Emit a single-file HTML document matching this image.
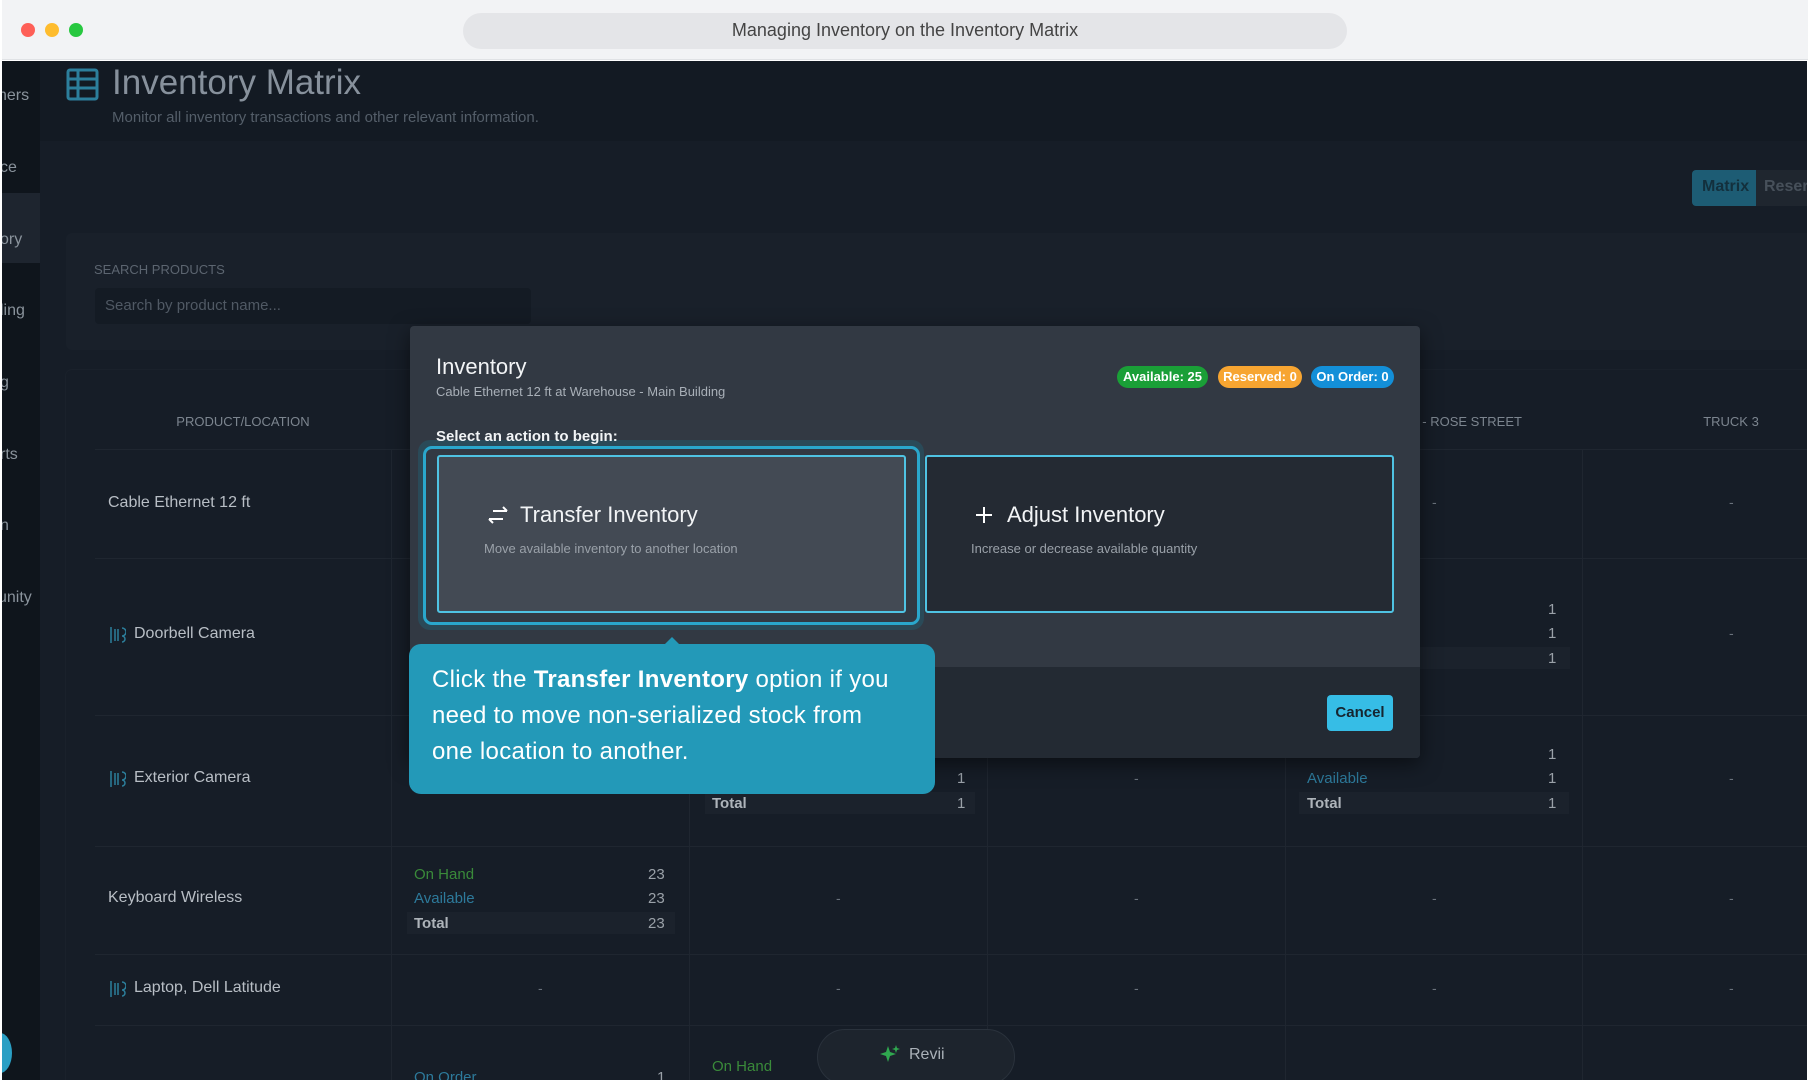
<!DOCTYPE html>
<html><head><meta charset="utf-8"><style>
*{margin:0;padding:0;box-sizing:border-box}
body{width:1810px;height:1080px;overflow:hidden;background:#fff;font-family:"Liberation Sans",sans-serif;position:relative}
.a{position:absolute}
.t{position:absolute;white-space:nowrap}
.dash{position:absolute;color:#6a727c;font-size:14px}
.lbl{font-size:16px}
</style></head><body>
<div class="a" style="left:2px;top:0;width:1806px;height:60px;background:#f2f3f5;border-bottom:1px solid #e0e2e5"></div>
<div class="a" style="left:21px;top:23px;width:14px;height:14px;border-radius:50%;background:#fe5f57"></div>
<div class="a" style="left:45px;top:23px;width:14px;height:14px;border-radius:50%;background:#febc2e"></div>
<div class="a" style="left:69px;top:23px;width:14px;height:14px;border-radius:50%;background:#28c840"></div>
<div class="a" style="left:463px;top:13px;width:884px;height:36px;border-radius:18px;background:#e4e5e8"></div>
<div class="t" style="left:463px;width:884px;top:20px;text-align:center;font-size:18px;color:#444">Managing Inventory on the Inventory Matrix</div>
<div class="a" style="left:2px;top:61px;width:1805px;height:1019px;background:#161d27;overflow:hidden">
  <div class="a" style="left:0;top:0;width:38px;height:1019px;background:#0f151c"></div>
  <div class="a" style="left:0;top:132px;width:38px;height:70px;background:#1e252f"></div>
  <div class="t" style="left:-4px;top:26px;color:#8a939c;font-size:16px">ners</div>
  <div class="t" style="left:-2px;top:98px;color:#8a939c;font-size:16px">ce</div>
  <div class="t" style="left:-2px;top:170px;color:#8a939c;font-size:16px">ory</div>
  <div class="t" style="left:-2px;top:241px;color:#8a939c;font-size:16px">ling</div>
  <div class="t" style="left:-2px;top:313px;color:#8a939c;font-size:16px">g</div>
  <div class="t" style="left:-2px;top:385px;color:#8a939c;font-size:16px">rts</div>
  <div class="t" style="left:-2px;top:456px;color:#8a939c;font-size:16px">n</div>
  <div class="t" style="left:-4px;top:528px;color:#8a939c;font-size:16px">unity</div>
  <div class="a" style="left:-14px;top:972px;width:24px;height:40px;border-radius:50%;background:#2a9fc4"></div>
  <div class="a" style="left:38px;top:0;width:1770px;height:80px;background:#131a23"></div>
  <svg class="a" style="left:64px;top:7px" width="33" height="33" viewBox="0 0 33 33" fill="none" stroke="#2c7f9c" stroke-width="3"><rect x="2" y="2" width="29" height="29" rx="2"/><path d="M2 11h29M2 20h29M12 2v29"/></svg>
  <div class="t" style="left:110px;top:2px;font-size:35px;color:#87919c">Inventory Matrix</div>
  <div class="t" style="left:110px;top:48px;font-size:15px;color:#545e69">Monitor all inventory transactions and other relevant information.</div>
  <div class="a" style="left:1690px;top:109px;width:64px;height:36px;border-radius:4px 0 0 4px;background:#1d5c74"></div>
  <div class="t" style="left:1700px;top:117px;font-size:16px;font-weight:bold;color:#13303d">Matrix</div>
  <div class="a" style="left:1754px;top:109px;width:60px;height:36px;background:#1f262f"></div>
  <div class="t" style="left:1762px;top:117px;font-size:16px;font-weight:bold;color:#47505a">Reser</div>
  <div class="a" style="left:64px;top:172px;width:1750px;height:117px;background:#19202a;border-radius:6px"></div>
  <div class="t" style="left:92px;top:201px;font-size:13px;color:#5c6570">SEARCH PRODUCTS</div>
  <div class="a" style="left:93px;top:227px;width:436px;height:36px;background:#141b24;border-radius:4px"></div>
  <div class="t" style="left:103px;top:236px;font-size:15px;color:#505964">Search by product name...</div>
  <div class="a" style="left:64px;top:309px;width:1750px;height:720px;background:#161d27;border-radius:6px;box-shadow:0 0 0 1px #1a212b"></div>
  <div class="t" style="left:93px;width:296px;top:353px;text-align:center;font-size:13px;color:#7c858f">PRODUCT/LOCATION</div>
  <div class="t" style="left:1408px;top:353px;font-size:13px;color:#7c858f">E - ROSE STREET</div>
  <div class="t" style="left:1580px;width:298px;top:353px;text-align:center;font-size:13px;color:#7c858f">TRUCK 3</div>
  <div class="a" style="left:93px;top:388px;width:1720px;height:1px;background:#1f2630"></div>
  <div class="a" style="left:93px;top:497px;width:1720px;height:1px;background:#1f2630"></div>
  <div class="a" style="left:93px;top:654px;width:1720px;height:1px;background:#1f2630"></div>
  <div class="a" style="left:93px;top:785px;width:1720px;height:1px;background:#1f2630"></div>
  <div class="a" style="left:93px;top:893px;width:1720px;height:1px;background:#1f2630"></div>
  <div class="a" style="left:93px;top:964px;width:1720px;height:1px;background:#1f2630"></div>
  <div class="a" style="left:389px;top:388px;width:1px;height:640px;background:#1f2630"></div>
  <div class="a" style="left:687px;top:388px;width:1px;height:640px;background:#1f2630"></div>
  <div class="a" style="left:985px;top:388px;width:1px;height:640px;background:#1f2630"></div>
  <div class="a" style="left:1283px;top:388px;width:1px;height:640px;background:#1f2630"></div>
  <div class="a" style="left:1580px;top:388px;width:1px;height:640px;background:#1f2630"></div>
  <div class="t lbl" style="left:106px;top:433px;color:#b8bec5">Cable Ethernet 12 ft</div>
  <svg class="a" style="left:106px;top:565px" width="18" height="18" viewBox="0 0 18 18" fill="none" stroke="#2c7f9c" stroke-width="1.5"><path d="M3 1v16M7 3v12M10 3v12M14 2a3 3 0 1 1 0 8M14 10a3 3 0 1 1 0 6"/></svg>
  <div class="t lbl" style="left:132px;top:564px;color:#b8bec5">Doorbell Camera</div>
  <svg class="a" style="left:106px;top:709px" width="18" height="18" viewBox="0 0 18 18" fill="none" stroke="#2c7f9c" stroke-width="1.5"><path d="M3 1v16M7 3v12M10 3v12M14 2a3 3 0 1 1 0 8M14 10a3 3 0 1 1 0 6"/></svg>
  <div class="t lbl" style="left:132px;top:708px;color:#b8bec5">Exterior Camera</div>
  <div class="t lbl" style="left:106px;top:828px;color:#b8bec5">Keyboard Wireless</div>
  <svg class="a" style="left:106px;top:919px" width="18" height="18" viewBox="0 0 18 18" fill="none" stroke="#2c7f9c" stroke-width="1.5"><path d="M3 1v16M7 3v12M10 3v12M14 2a3 3 0 1 1 0 8M14 10a3 3 0 1 1 0 6"/></svg>
  <div class="t lbl" style="left:132px;top:918px;color:#b8bec5">Laptop, Dell Latitude</div>
  <div class="dash" style="left:1430px;top:433px">-</div><div class="dash" style="left:1727px;top:433px">-</div>
  <div class="t" style="left:1546px;top:540px;color:#9aa1a8;font-size:15px">1</div>
  <div class="t" style="left:1546px;top:564px;color:#9aa1a8;font-size:15px">1</div>
  <div class="a" style="left:1290px;top:586px;width:278px;height:22px;background:#1b222c"></div>
  <div class="t" style="left:1546px;top:589px;color:#9aa1a8;font-size:15px">1</div>
  <div class="dash" style="left:1727px;top:564px">-</div>
  <div class="a" style="left:703px;top:731px;width:270px;height:22px;background:#1b222c"></div>
  <div class="t" style="left:710px;top:734px;color:#aeb4ba;font-size:15px;font-weight:bold">Total</div>
  <div class="t" style="left:955px;top:709px;color:#9aa1a8;font-size:15px">1</div>
  <div class="t" style="left:955px;top:734px;color:#9aa1a8;font-size:15px">1</div>
  <div class="dash" style="left:1132px;top:709px">-</div>
  <div class="t" style="left:1546px;top:685px;color:#9aa1a8;font-size:15px">1</div>
  <div class="t" style="left:1305px;top:709px;color:#2d7a9b;font-size:15px">Available</div>
  <div class="t" style="left:1546px;top:709px;color:#9aa1a8;font-size:15px">1</div>
  <div class="a" style="left:1297px;top:731px;width:270px;height:22px;background:#1b222c"></div>
  <div class="t" style="left:1305px;top:734px;color:#aeb4ba;font-size:15px;font-weight:bold">Total</div>
  <div class="t" style="left:1546px;top:734px;color:#9aa1a8;font-size:15px">1</div>
  <div class="dash" style="left:1727px;top:709px">-</div>
  <div class="t" style="left:412px;top:805px;color:#3a8a3a;font-size:15px">On Hand</div>
  <div class="t" style="left:646px;top:805px;color:#9aa1a8;font-size:15px">23</div>
  <div class="t" style="left:412px;top:829px;color:#2d7a9b;font-size:15px">Available</div>
  <div class="t" style="left:646px;top:829px;color:#9aa1a8;font-size:15px">23</div>
  <div class="a" style="left:405px;top:851px;width:268px;height:22px;background:#1b222c"></div>
  <div class="t" style="left:412px;top:854px;color:#aeb4ba;font-size:15px;font-weight:bold">Total</div>
  <div class="t" style="left:646px;top:854px;color:#9aa1a8;font-size:15px">23</div>
  <div class="dash" style="left:834px;top:829px">-</div><div class="dash" style="left:1132px;top:829px">-</div><div class="dash" style="left:1430px;top:829px">-</div><div class="dash" style="left:1727px;top:829px">-</div>
  <div class="dash" style="left:536px;top:919px">-</div><div class="dash" style="left:834px;top:919px">-</div><div class="dash" style="left:1132px;top:919px">-</div><div class="dash" style="left:1430px;top:919px">-</div><div class="dash" style="left:1727px;top:919px">-</div>
  <div class="t" style="left:412px;top:1008px;color:#2d7a9b;font-size:15px">On Order</div>
  <div class="t" style="left:655px;top:1008px;color:#9aa1a8;font-size:15px">1</div>
  <div class="t" style="left:710px;top:997px;color:#3a8a3a;font-size:15px">On Hand</div>
  <div class="a" style="left:815px;top:968px;width:198px;height:56px;border-radius:28px;background:#1d242d;border:1px solid #2a323c"></div>
  <svg class="a" style="left:877px;top:983px" width="22" height="22" viewBox="0 0 22 22" fill="#2fa84f"><path d="M9 2l2 6 6 2-6 2-2 6-2-6-6-2 6-2z"/><path d="M17 1l1 3 3 1-3 1-1 3-1-3-3-1 3-1z"/></svg>
  <div class="t" style="left:907px;top:985px;color:#aab1b8;font-size:16px">Revii</div>
</div>
<div class="a" style="left:410px;top:326px;width:1010px;height:432px;background:#323943;border-radius:4px;box-shadow:0 6px 20px rgba(0,0,0,.5);overflow:hidden">
  <div class="a" style="left:0;top:341px;width:1010px;height:91px;background:#232a33"></div>
</div>
<div class="t" style="left:436px;top:354px;font-size:22px;color:#f2f4f6">Inventory</div>
<div class="t" style="left:436px;top:384px;font-size:13px;color:#a9b0b8">Cable Ethernet 12 ft at Warehouse - Main Building</div>
<div class="t" style="left:1117px;top:366px;width:91px;height:22px;border-radius:11px;background:#1a9f37;color:#fff;font-size:13px;font-weight:bold;text-align:center;line-height:22px">Available: 25</div>
<div class="t" style="left:1218px;top:366px;width:84px;height:22px;border-radius:11px;background:#f7a531;color:#fff;font-size:13px;font-weight:bold;text-align:center;line-height:22px">Reserved: 0</div>
<div class="t" style="left:1311px;top:366px;width:83px;height:22px;border-radius:11px;background:#138fd8;color:#fff;font-size:13px;font-weight:bold;text-align:center;line-height:22px">On Order: 0</div>
<div class="a" style="left:418px;top:440px;width:506px;height:190px;border-radius:12px;background:#2a4a58"></div>
<div class="a" style="left:423px;top:446px;width:497px;height:179px;border-radius:9px;border:3px solid #2aa7cc;background:#323943"></div>
<div class="t" style="left:436px;top:428px;font-size:15px;font-weight:bold;color:#f2f4f6">Select an action to begin:</div>
<div class="a" style="left:437px;top:455px;width:469px;height:158px;border-radius:3px;border:2px solid #4fc3e3;background:#434a54"></div>
<svg class="a" style="left:487px;top:506px" width="22" height="18" viewBox="0 0 22 18" fill="none" stroke="#fff" stroke-width="2"><path d="M6 5h14M16 1l4 4"/><path d="M16 13H2M6 17l-4-4"/></svg>
<div class="t" style="left:520px;top:502px;font-size:22px;color:#f2f4f6">Transfer Inventory</div>
<div class="t" style="left:484px;top:541px;font-size:13px;color:#9aa1a9">Move available inventory to another location</div>
<div class="a" style="left:925px;top:455px;width:469px;height:158px;border-radius:3px;border:2px solid #4fc3e3;background:#242a33"></div>
<svg class="a" style="left:975px;top:506px" width="18" height="18" viewBox="0 0 18 18" stroke="#fff" stroke-width="2"><path d="M9 1v16M1 9h16"/></svg>
<div class="t" style="left:1007px;top:502px;font-size:22px;color:#f2f4f6">Adjust Inventory</div>
<div class="t" style="left:971px;top:541px;font-size:13px;color:#9aa1a9">Increase or decrease available quantity</div>
<div class="t" style="left:1327px;top:695px;width:66px;height:36px;border-radius:4px;background:#36bde6;color:#162530;font-size:15px;font-weight:bold;text-align:center;line-height:36px">Cancel</div>
<div class="a" style="left:664px;top:637px;width:0;height:0;border-left:8px solid transparent;border-right:8px solid transparent;border-bottom:8px solid #2399b8"></div>
<div class="a" style="left:409px;top:644px;width:526px;height:150px;border-radius:12px;background:#2399b8"></div>
<div class="a" style="left:432px;top:662px;width:468px;font-size:24px;letter-spacing:0.3px;line-height:36px;color:#fff">Click the <b>Transfer Inventory</b> option if you need to move non-serialized stock from one location to another.</div>
</body></html>
